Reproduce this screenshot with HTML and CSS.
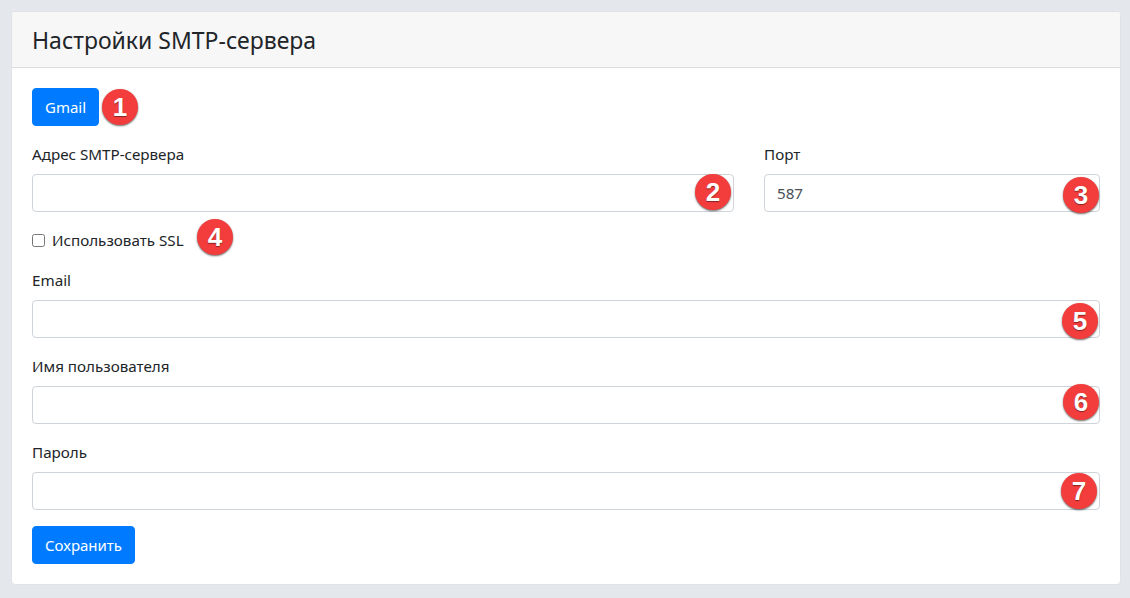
FILE: index.html
```html
<!DOCTYPE html>
<html lang="ru">
<head>
    <meta charset="UTF-8">
    <meta name="viewport" content="width=device-width, initial-scale=1.0">
    <title>Настройки SMTP-сервера</title>
    <link rel="stylesheet" href="styles.css">
</head>
<body>
    <div class="card">
        <div class="card-header">
            <h1 class="card-title">Настройки SMTP-сервера</h1>
        </div>
        <form class="card-body">
            <div class="preset-row">
                <button type="button" class="btn">Gmail</button>
                <span class="marker marker-1">1</span>
            </div>

            <div class="row">
                <div class="col-wide">
                    <label class="field-label" for="host">Адрес SMTP-сервера</label>
                    <div class="input-wrap">
                        <input class="form-control" id="host" type="text">
                        <span class="marker marker-2">2</span>
                    </div>
                </div>
                <div class="col-narrow">
                    <label class="field-label" for="port">Порт</label>
                    <div class="input-wrap">
                        <input class="form-control" id="port" type="text" value="587">
                        <span class="marker marker-3">3</span>
                    </div>
                </div>
            </div>

            <div class="form-check">
                <input class="check-input" id="ssl" type="checkbox">
                <label class="check-label" for="ssl">Использовать SSL</label>
                <span class="marker marker-4">4</span>
            </div>

            <div class="form-group">
                <label class="field-label" for="email">Email</label>
                <div class="input-wrap">
                    <input class="form-control" id="email" type="text">
                    <span class="marker marker-5">5</span>
                </div>
            </div>

            <div class="form-group">
                <label class="field-label" for="user">Имя пользователя</label>
                <div class="input-wrap">
                    <input class="form-control" id="user" type="text">
                    <span class="marker marker-6">6</span>
                </div>
            </div>

            <div class="form-group">
                <label class="field-label" for="password">Пароль</label>
                <div class="input-wrap">
                    <input class="form-control" id="password" type="password">
                    <span class="marker marker-7">7</span>
                </div>
            </div>

            <button type="submit" class="btn">Сохранить</button>
        </form>
    </div>
</body>
</html>
```

FILE: styles.css
```css
* {
    box-sizing: border-box;
}
html, body {
    height: 100%;
}
body {
    margin: 0;
    padding: 11px 9px 0 11px;
    overflow: hidden;
    background-color: #e4e7ec;
    color: #212529;
    font-family: "Noto Sans", "Open Sans", sans-serif;
    font-size: 15.2px;
    line-height: 24px;
}
.card {
    background: #fff;
    border: 1px solid #dfe2e6;
    border-radius: 4px;
}
.card-header {
    height: 56px;
    padding: 12px 20px;
    background-color: #f7f7f7;
    border-bottom: 1px solid #d9dbde;
    border-radius: 3px 3px 0 0;
}
.card-title {
    margin: 0;
    font-size: 23px;
    font-weight: 400;
    line-height: 33px;
}
.card-body {
    padding: 20px;
}
.preset-row {
    position: relative;
    margin-bottom: 16px;
}
.btn {
    display: block;
    height: 38px;
    padding: 0 12px;
    background-color: #007bff;
    color: #fff;
    border: 1px solid #007bff;
    border-radius: 4px;
    font: inherit;
    font-size: 15px;
    cursor: pointer;
}
.row {
    display: flex;
    margin: 0 -15px;
}
.col-wide, .col-narrow {
    padding: 0 15px;
}
.col-wide {
    flex: 0 0 66.6667%;
}
.col-narrow {
    flex: 0 0 33.3333%;
}
.row, .form-group {
    margin-bottom: 16px;
}
.field-label {
    display: block;
    margin-bottom: 8px;
}
.input-wrap {
    position: relative;
}
.form-control {
    display: block;
    width: 100%;
    height: 38px;
    padding: 6px 12px;
    background: #fff;
    color: #495057;
    border: 1px solid #ced4da;
    border-radius: 4px;
    font: inherit;
}
.form-check {
    position: relative;
    display: flex;
    align-items: center;
    height: 24px;
    margin-bottom: 16px;
}
.check-input {
    width: 13px;
    height: 13px;
    margin: 0 7px 0 0;
}
.marker {
    position: absolute;
    display: flex;
    align-items: center;
    justify-content: center;
    width: 36px;
    height: 36px;
    background-color: #f33d3d;
    color: #fff;
    border-radius: 50%;
    box-shadow: 0 1px 2px rgba(0, 0, 0, 0.6);
    font-family: "Liberation Sans", Arial, sans-serif;
    font-size: 26px;
    font-weight: 700;
    line-height: 1;
    text-shadow: 0 1px 1px rgba(0, 0, 0, 0.45);
}
.marker-1 { left: 70px; top: 1px; }
.marker-2 { right: 3px; top: 0; }
.marker-3 { right: 1px; top: 3px; }
.marker-4 { left: 165px; top: -9px; }
.marker-5 { right: 2px; top: 3px; }
.marker-6 { right: 1px; top: -2px; }
.marker-7 { right: 3px; top: 1px; }
```
